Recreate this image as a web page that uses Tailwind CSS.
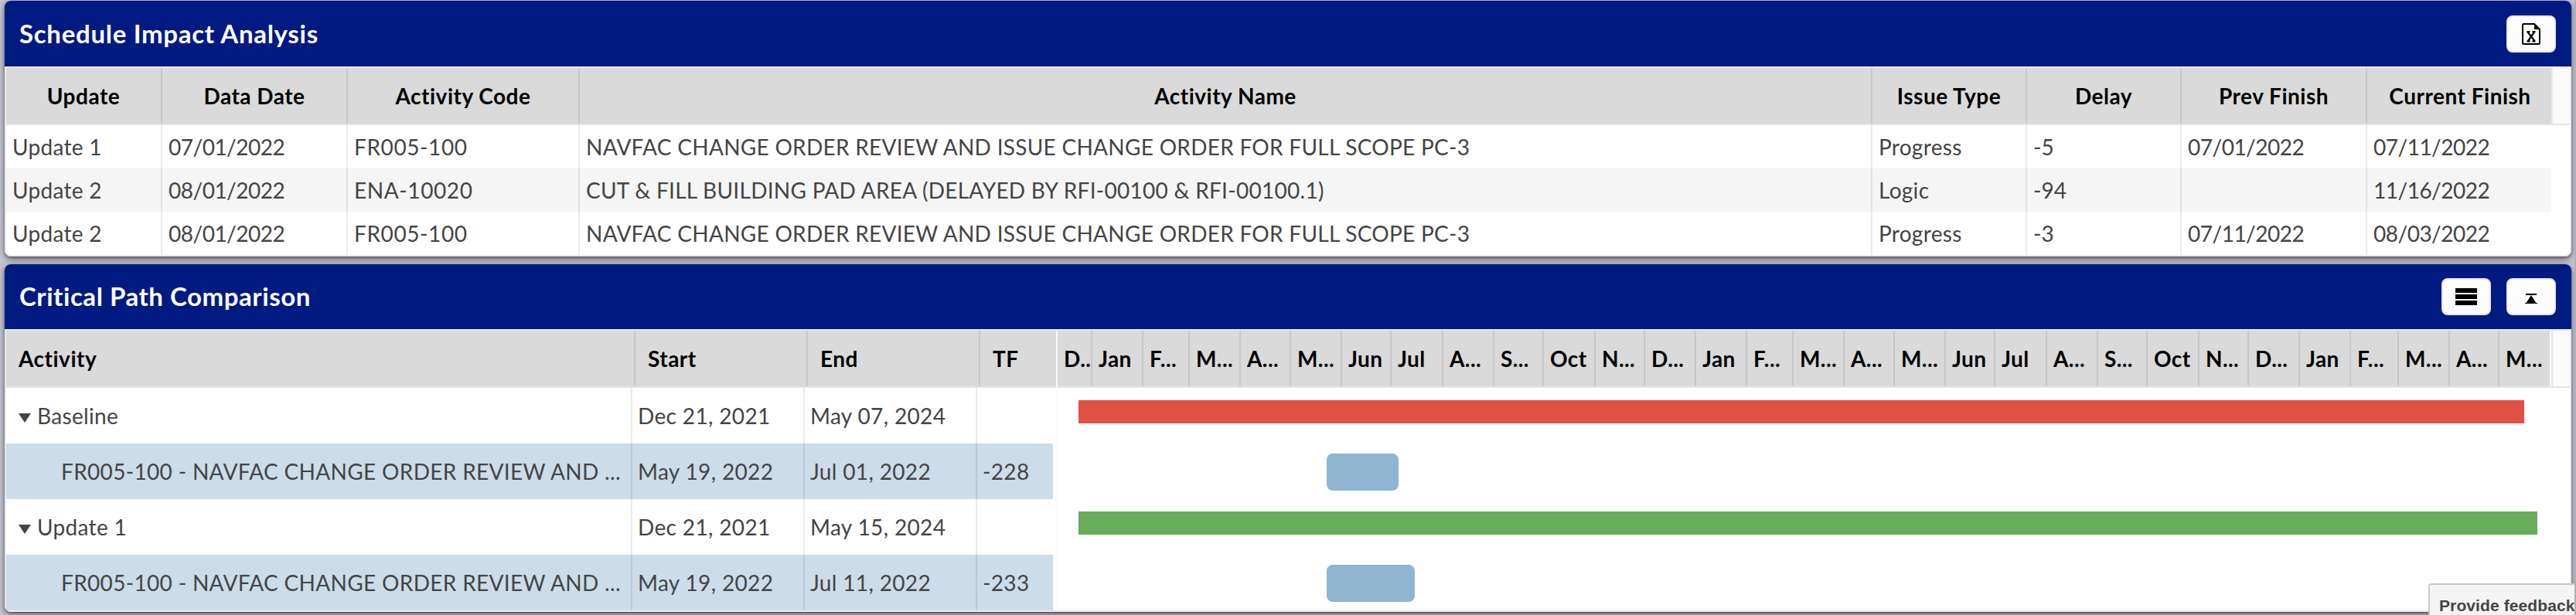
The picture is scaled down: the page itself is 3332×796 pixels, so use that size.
<!DOCTYPE html>
<html lang="en">
<head>
<meta charset="utf-8">
<title>Schedule Impact Analysis</title>
<script src="https://cdn.jsdelivr.net/npm/@tailwindcss/browser@4"></script>
</head>
<body class="relative h-[796px] w-[3332px] overflow-hidden border-r-2 border-[#b0b0b4] bg-[#c5c6d3] pt-px pr-1 pl-1.5 text-[28px] whitespace-nowrap text-[#444]" style="font-family: Lato, sans-serif">

<section class="h-[331px] overflow-hidden rounded-[8px] bg-white shadow-[0_3px_8px_rgba(0,0,0,0.55),0_1px_2px_rgba(0,0,0,0.35)]">
  <header class="flex h-[85px] items-center justify-between bg-[#001a82] pr-5 pl-[19px] text-white">
    <h2 class="text-[33px] font-bold tracking-[0.7px]">Schedule Impact Analysis</h2>
    <button class="flex h-12 w-16 items-center justify-center rounded-[8px] border-2 border-[#e8e8e8] bg-linear-to-b from-white to-[#fafafa]">
      <svg width="24" height="28" viewBox="0 0 24 28"><path d="M2.5 1H16l7 7v17.5q0 1.500-1.500 1.500h-19Q1 27 1 25.500v-23Q1 1 2.500 1Z" fill="none" stroke="#000" stroke-width="2"/><path d="M16 0l8 8h-8Z" fill="#000"/><path d="M7.500 11.500L16.500 23M16 11.500L8 23M6.500 11h4M13.500 11h4M6.500 23.300h4M13.500 23.300h4" fill="none" stroke="#000" stroke-width="2.200"/></svg>
    </button>
  </header>
  <div class="h-[246px] rounded-b-[8px] border-2 border-[#ebebeb]">
    <div class="h-[74px] border-b-2 border-[#e4e4e4] bg-[#fafafa]">
      <div id="impactHead" class="grid h-[72px] w-[3294px] grid-cols-[200px_240px_300px_1672px_200px_200px_240px_242px] border-r-2 border-[#e8e8e8] bg-[#dadada] text-center font-bold tracking-[0.5px] text-black"></div>
    </div>
    <div id="impactRows"></div>
  </div>
</section>

<section class="mt-[10px] h-[450px] overflow-hidden rounded-[8px] bg-white shadow-[0_3px_8px_rgba(0,0,0,0.55),0_1px_2px_rgba(0,0,0,0.35)]">
  <header class="flex h-[84px] items-center justify-between bg-[#001a82] pr-5 pl-[19px] text-white">
    <h2 class="text-[33px] font-bold tracking-[0.55px]">Critical Path Comparison</h2>
    <div class="flex gap-5">
      <button class="flex h-12 w-16 items-center justify-center rounded-[8px] border-2 border-[#e8e8e8] bg-linear-to-b from-white to-[#fafafa]">
        <svg width="28" height="22" viewBox="0 0 28 22"><path d="M0 0h28v6H0ZM0 8h28v6H0ZM0 16h28v6H0Z"/></svg>
      </button>
      <button class="flex h-12 w-16 items-center justify-center rounded-[8px] border-2 border-[#e8e8e8] bg-linear-to-b from-white to-[#fafafa]">
        <svg class="mt-1" width="16" height="13" viewBox="0 0 16 13"><path d="M1 0h14v2H1ZM8 2L15 13H1ZM0 12h16v1H0Z"/></svg>
      </button>
    </div>
  </header>
  <div class="flex h-[366px] rounded-b-[8px] border-2 border-[#ebebeb]">
    <div class="w-[1358px]">
      <div id="treeHead" class="grid h-[74px] grid-cols-[812px_223px_223px_100px] border-b-2 border-[#e4e4e4] bg-[#dadada] font-bold tracking-[0.5px] text-black"></div>
      <div id="treeRows" class="w-[1354px]"></div>
    </div>
    <div class="w-[1958px] border-l-2 border-[#fafafa]">
      <div class="flex h-[74px] border-b-2 border-[#e4e4e4] bg-[#fafafa]">
        <div id="months" class="flex h-[72px] w-[1930px] bg-[#dadada] font-bold tracking-[0.4px] text-black"></div>
        <div class="ml-0.5 w-0.5 bg-[#e4e4e4]"></div>
      </div>
      <div class="h-[72px] pt-4 pl-[27px]"><div class="h-[30px] w-[1870px] bg-[#e05143]"></div></div>
      <div class="h-[72px] pt-[13px] pl-[348px]"><div class="h-12 w-[93px] rounded-[8px] bg-[#90b5d1]"></div></div>
      <div class="h-[72px] pt-4 pl-[27px]"><div class="h-[30px] w-[1887px] bg-[#67ab5b]"></div></div>
      <div class="h-[72px] pt-[13px] pl-[348px]"><div class="h-12 w-[114px] rounded-[8px] bg-[#90b5d1]"></div></div>
    </div>
  </div>
</section>

<div class="absolute top-[755px] left-[3141px] h-[60px] w-[240px] rounded-tl-[4px] border-2 border-[#c8c8c8] bg-[#f4f4f4] pt-[13px] pl-[12px] text-[21px] leading-[28px] font-bold tracking-[0.1px] text-[#444]" style="font-family: 'Liberation Sans', sans-serif">Provide feedback</div>

<script>
const put = (id, html) => { document.getElementById(id).innerHTML = html; };
const edge = 'border-l-2 border-black/8 ';

put('impactHead', ['Update', 'Data Date', 'Activity Code', 'Activity Name', 'Issue Type', 'Delay', 'Prev Finish', 'Current Finish']
  .map((t, i) => `<div class="${i ? edge : ''}leading-[72px]">${t}</div>`).join(''));

const NAV = 'NAVFAC CHANGE ORDER REVIEW AND ISSUE CHANGE ORDER FOR FULL SCOPE PC-3';
const impact = [
  ['Update 1', '07/01/2022', 'FR005-100', NAV, 'Progress', '-5', '07/01/2022', '07/11/2022'],
  ['Update 2', '08/01/2022', 'ENA-10020', 'CUT &amp; FILL BUILDING PAD AREA (DELAYED BY RFI-00100 &amp; RFI-00100.1)', 'Logic', '-94', '', '11/16/2022'],
  ['Update 2', '08/01/2022', 'FR005-100', NAV, 'Progress', '-3', '07/11/2022', '08/03/2022'],
];
const spacing = ['tracking-[0.3px]', 'tracking-[-0.5px]', 'tracking-[0.6px]', 'tracking-[0.28px]', 'tracking-[0.3px]', '', 'tracking-[-0.5px]', 'tracking-[-0.5px]'];
put('impactRows', impact.map((r, n) =>
  `<div class="grid h-14 w-[3292px] grid-cols-[200px_240px_300px_1672px_200px_200px_240px_240px] ${n === 1 ? 'bg-[#f5f5f5]' : ''}">` +
  r.map((t, i) => `<div class="${i ? edge : ''}pl-2 leading-[56px] ${spacing[i]}">${t}</div>`).join('') + '</div>').join(''));

put('treeHead', ['Activity', 'Start', 'End', 'TF'].map((t, i) => `<div class="${i ? edge : ''}pl-4 leading-[72px]">${t}</div>`).join(''));

const task = 'FR005-100 - NAVFAC CHANGE ORDER REVIEW AND ...';
const tree = [
  ['Baseline', 'Dec 21, 2021', 'May 07, 2024', ''],
  [task, 'May 19, 2022', 'Jul 01, 2022', '-228'],
  ['Update 1', 'Dec 21, 2021', 'May 15, 2024', ''],
  [task, 'May 19, 2022', 'Jul 11, 2022', '-233'],
];
const arrow = '<svg class="mt-1.5 mr-2" width="16" height="12" viewBox="0 0 16 12"><path d="M0 0h16L8 12Z" fill="#444"/></svg>';
put('treeRows', tree.map((r, n) =>
  `<div class="grid h-[72px] grid-cols-[808px_223px_223px_100px] ${n % 2 ? 'bg-[#ccdce9]' : ''}">` +
  r.map((t, i) => i
    ? `<div class="border-l-2 border-black/8 pl-[7px] leading-[72px] tracking-[0.35px]">${t}</div>`
    : `<div class="flex items-center tracking-[0.33px] ${n % 2 ? 'pl-[71px]' : 'pl-4'}">${n % 2 ? '' : arrow}${t}</div>`).join('') + '</div>').join(''));

/* [label, column width in px] */
const months = [['D..', 43], ['Jan', 66], ['F...', 60], ['M...', 66], ['A...', 65], ['M...', 66], ['Jun', 64], ['Jul', 67], ['A...', 66], ['S...', 64], ['Oct', 67], ['N...', 64], ['D...', 66], ['Jan', 66], ['F...', 60], ['M...', 66], ['A...', 65], ['M...', 66], ['Jun', 64], ['Jul', 67], ['A...', 66], ['S...', 64], ['Oct', 67], ['N...', 64], ['D...', 66], ['Jan', 66], ['F...', 62], ['M...', 66], ['A...', 64], ['M...', 67]];
put('months', months.map(([t, w], i) => `<div class="${i ? edge : ''}shrink-0 pl-2 leading-[72px]" style="width:${w}px">${t}</div>`).join(''));
</script>
</body>
</html>
